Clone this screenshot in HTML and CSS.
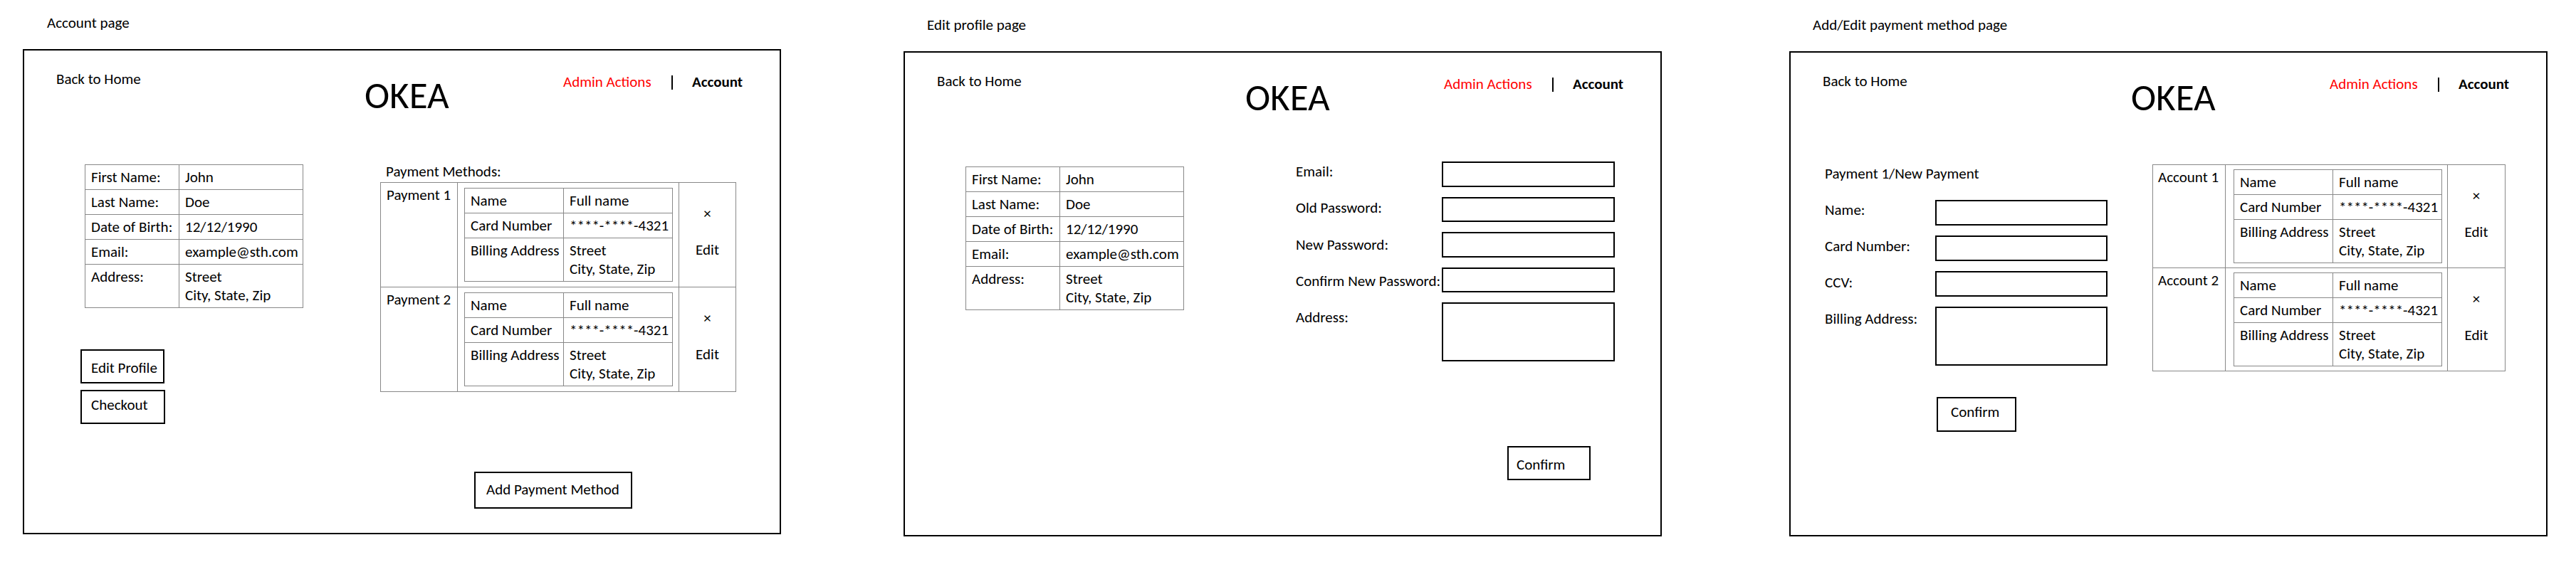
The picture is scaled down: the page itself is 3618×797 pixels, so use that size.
FILE: index.html
```html
<!DOCTYPE html>
<html lang="en">
<head>
<meta charset="utf-8">
<title>OKEA wireframes</title>
<link rel="stylesheet" href="styles.css">
</head>
<body>
<div class="board">

  <section class="panel panel-1">
    <div class="caption">Account page</div>
    <div class="frame">
      <header class="top">
        <div class="home">Back to Home</div>
        <div class="logo">OKEA</div>
        <nav class="nav"><span class="admin">Admin Actions</span><span class="sep"></span><span class="acct">Account</span></nav>
      </header>
      <div class="main">
        <div class="col-left">
          <table class="grid profile">
            <tr><td class="k">First Name:</td><td>John</td></tr>
            <tr><td class="k">Last Name:</td><td>Doe</td></tr>
            <tr><td class="k">Date of Birth:</td><td>12/12/1990</td></tr>
            <tr><td class="k">Email:</td><td>example@sth.com</td></tr>
            <tr><td class="k">Address:</td><td>Street<br>City, State, Zip</td></tr>
          </table>
          <div class="btn btn-edit">Edit Profile</div>
          <div class="btn btn-checkout">Checkout</div>
        </div>
        <div class="col-right">
          <div class="pm-title">Payment Methods:</div>
          <table class="methods">
            <tr>
              <td class="m-name">Payment 1</td>
              <td class="m-card">
                <table class="grid card">
                  <tr><td class="k">Name</td><td>Full name</td></tr>
                  <tr><td class="k">Card Number</td><td>****-****-4321</td></tr>
                  <tr><td class="k">Billing Address</td><td>Street<br>City, State, Zip</td></tr>
                </table>
              </td>
              <td class="m-act"><div class="x">×</div><div class="edit">Edit</div></td>
            </tr>
            <tr>
              <td class="m-name">Payment 2</td>
              <td class="m-card">
                <table class="grid card">
                  <tr><td class="k">Name</td><td>Full name</td></tr>
                  <tr><td class="k">Card Number</td><td>****-****-4321</td></tr>
                  <tr><td class="k">Billing Address</td><td>Street<br>City, State, Zip</td></tr>
                </table>
              </td>
              <td class="m-act"><div class="x">×</div><div class="edit">Edit</div></td>
            </tr>
          </table>
          <div class="btn btn-add">Add Payment Method</div>
        </div>
      </div>
    </div>
  </section>

  <section class="panel panel-2">
    <div class="caption">Edit profile page</div>
    <div class="frame">
      <header class="top">
        <div class="home">Back to Home</div>
        <div class="logo">OKEA</div>
        <nav class="nav"><span class="admin">Admin Actions</span><span class="sep"></span><span class="acct">Account</span></nav>
      </header>
      <div class="main">
        <div class="col-left">
          <table class="grid profile">
            <tr><td class="k">First Name:</td><td>John</td></tr>
            <tr><td class="k">Last Name:</td><td>Doe</td></tr>
            <tr><td class="k">Date of Birth:</td><td>12/12/1990</td></tr>
            <tr><td class="k">Email:</td><td>example@sth.com</td></tr>
            <tr><td class="k">Address:</td><td>Street<br>City, State, Zip</td></tr>
          </table>
        </div>
        <div class="form profile-form">
          <div class="labels">
            <div class="flabel">Email:</div>
            <div class="flabel">Old Password:</div>
            <div class="flabel">New Password:</div>
            <div class="flabel">Confirm New Password:</div>
            <div class="flabel">Address:</div>
          </div>
          <div class="inputs">
            <div class="finput"></div>
            <div class="finput"></div>
            <div class="finput"></div>
            <div class="finput"></div>
            <div class="finput farea"></div>
            <div class="btn btn-confirm">Confirm</div>
          </div>
        </div>
      </div>
    </div>
  </section>

  <section class="panel panel-3">
    <div class="caption">Add/Edit payment method page</div>
    <div class="frame">
      <header class="top">
        <div class="home">Back to Home</div>
        <div class="logo">OKEA</div>
        <nav class="nav"><span class="admin">Admin Actions</span><span class="sep"></span><span class="acct">Account</span></nav>
      </header>
      <div class="main">
        <div class="pay-form">
          <div class="pf-title">Payment 1/New Payment</div>
          <div class="form">
            <div class="labels">
              <div class="flabel">Name:</div>
              <div class="flabel">Card Number:</div>
              <div class="flabel">CCV:</div>
              <div class="flabel">Billing Address:</div>
            </div>
            <div class="inputs">
              <div class="finput"></div>
              <div class="finput"></div>
              <div class="finput"></div>
              <div class="finput farea"></div>
              <div class="btn btn-confirm2">Confirm</div>
            </div>
          </div>
        </div>
        <div class="accounts">
          <table class="methods methods-acc">
            <tr>
              <td class="m-name">Account 1</td>
              <td class="m-card">
                <table class="grid card">
                  <tr><td class="k">Name</td><td>Full name</td></tr>
                  <tr><td class="k">Card Number</td><td>****-****-4321</td></tr>
                  <tr><td class="k">Billing Address</td><td>Street<br>City, State, Zip</td></tr>
                </table>
              </td>
              <td class="m-act"><div class="x">×</div><div class="edit">Edit</div></td>
            </tr>
            <tr>
              <td class="m-name">Account 2</td>
              <td class="m-card">
                <table class="grid card">
                  <tr><td class="k">Name</td><td>Full name</td></tr>
                  <tr><td class="k">Card Number</td><td>****-****-4321</td></tr>
                  <tr><td class="k">Billing Address</td><td>Street<br>City, State, Zip</td></tr>
                </table>
              </td>
              <td class="m-act"><div class="x">×</div><div class="edit">Edit</div></td>
            </tr>
          </table>
        </div>
      </div>
    </div>
  </section>

</div>
</body>
</html>
```

FILE: styles.css
```css
* { box-sizing: border-box; }

html, body {
  margin: 0;
  padding: 0;
  background: #ffffff;
}

body {
  width: 3618px;
  height: 797px;
  overflow: hidden;
  font-family: Carlito, Calibri, Lato, "Liberation Sans", sans-serif;
  font-size: 21px;
  line-height: 26px;
  color: #000;
}

.board {
  display: flex;
  align-items: flex-start;
}

.panel { flex: none; }
.panel-1 { margin-left: 32px; }
.panel-2 { margin-left: 172px; padding-top: 3px; }
.panel-3 { margin-left: 179px; padding-top: 3px; }

.caption {
  height: 26px;
  margin-top: 19px;
  margin-bottom: 2px;
  padding-left: 34px;
  white-space: nowrap;
}
.panel-2 .caption, .panel-3 .caption { padding-left: 33px; }

.frame {
  width: 1065px;
  height: 682px;
  margin-top: 24px;
  border: 2px solid #000;
}

/* header */
.top {
  display: flex;
  align-items: flex-start;
  height: 120px;
}
.home {
  margin-left: 45px;
  width: 433px;
  margin-top: 27px;
  white-space: nowrap;
}
.logo {
  width: 279px;
  margin-top: 31px;
  font-size: 53px;
  line-height: 64px;
}
.nav {
  display: flex;
  align-items: flex-start;
  margin-top: 31px;
  white-space: nowrap;
}
.admin { width: 152px; color: #ff0000; }
.sep {
  width: 2px;
  height: 20px;
  margin-top: 4px;
  margin-right: 27px;
  background: #000;
}
.acct { font-weight: bold; }

/* main */
.main {
  display: flex;
  align-items: flex-start;
}
.col-left {
  margin-left: 85px;
  width: 415px;
  padding-top: 40px;
}

/* grid tables */
.grid {
  border-collapse: collapse;
  table-layout: fixed;
}
.grid td {
  border: 1px solid #888;
  padding: 4px 6px 4px 8px;
  vertical-align: top;
  white-space: nowrap;
}
.profile { width: 307px; }
.profile td.k { width: 132px; }

.card { width: 293px; }
.card td.k { width: 139px; }

/* buttons */
.btn {
  border: 2px solid #000;
  white-space: nowrap;
}
.btn-edit {
  width: 118px;
  height: 48px;
  margin-top: 58px;
  margin-left: -6px;
  padding: 11px 0 0 13px;
}
.btn-checkout {
  width: 119px;
  height: 48px;
  margin-top: 9px;
  margin-left: -6px;
  padding: 6px 0 0 13px;
}
.btn-add {
  width: 222px;
  height: 52px;
  margin-top: 112px;
  margin-left: 132px;
  padding: 10px 0 0 15px;
}
.btn-confirm {
  width: 117px;
  height: 48px;
  margin-top: 105px;
  margin-left: 92px;
  padding: 11px 0 0 11px;
}
.btn-confirm2 {
  width: 112px;
  height: 49px;
  margin-left: 2px;
  padding: 6px 0 0 18px;
}

/* payment methods */
.col-right { margin-top: 37px; }
.pm-title { padding-left: 8px; height: 26px; margin-bottom: 1px; }

.methods {
  margin-top: 2px;
  width: 500px;
  border-collapse: collapse;
  table-layout: fixed;
}
.methods > tbody > tr > td {
  border: 1px solid #888;
  vertical-align: top;
}
.m-name {
  width: 108px;
  padding: 4px 8px;
  white-space: nowrap;
}
.m-card {
  width: 311px;
  padding: 7px 8px 7px 9px;
}
.m-act {
  text-align: center;
  padding-top: 30px;
}
.x { font-size: 21px; }
.edit { margin-top: 25px; }

.methods-acc { width: 496px; margin-top: 0; }
.methods-acc .m-name { width: 102px; padding-left: 7px; }
.methods-acc .m-card { width: 312px; padding: 6px 7px 6px 11px; }

/* forms */
.form {
  display: flex;
  align-items: flex-start;
}
.labels {
  flex: none;
  display: flex;
  flex-direction: column;
}
.flabel {
  height: 26px;
  white-space: nowrap;
}
.inputs {
  flex: none;
  display: flex;
  flex-direction: column;
  align-items: flex-start;
}
.finput {
  height: 35.5px;
  border: 2px solid #000;
}
.farea { height: 82.5px; }

.profile-form {
  margin-left: 49px;
  margin-top: 33px;
}
.profile-form .labels { width: 205px; padding-top: 1px; gap: 25.3px; }
.profile-form .inputs { gap: 14px; }
.profile-form .finput { width: 243px; }

.pay-form {
  margin-left: 48px;
  width: 460px;
  margin-top: 37px;
}
.pf-title { height: 26px; white-space: nowrap; }
.pay-form .form { margin-top: 24px; }
.pay-form .labels { width: 155px; padding-top: 1px; gap: 25px; }
.pay-form .inputs { gap: 14.5px; }
.pay-form .finput { width: 242px; }
.pay-form .btn-confirm2 { margin-top: 29.5px; }

.accounts { margin-top: 37px; }
```
